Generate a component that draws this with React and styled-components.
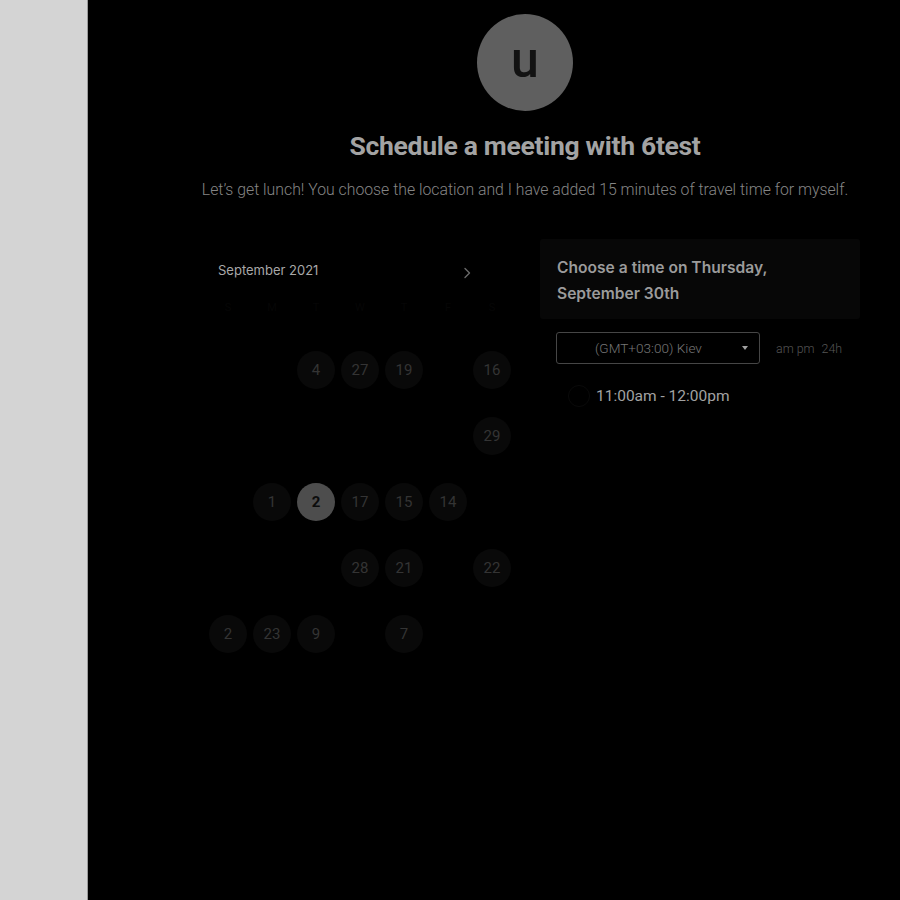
import React from 'react';
import styled, { createGlobalStyle } from 'styled-components';

const GlobalStyle = createGlobalStyle`
  html, body {
    margin: 0;
    padding: 0;
    background: #000;
  }
  body {
    font-family: Roboto, "Liberation Sans", sans-serif;
  }
  * {
    box-sizing: border-box;
  }
`;

const Page = styled.div`
  display: flex;
  width: 900px;
  height: 900px;
  overflow: hidden;
`;

const Sidebar = styled.aside`
  width: 88px;
  flex-shrink: 0;
  background: #d4d4d4;
  border-right: 1px solid #9a9a9a;
`;

const Main = styled.main`
  flex: 1;
  background: #000;
  padding: 14px 0 0 112px;
`;

const Content = styled.div`
  width: 650px;
`;

const Header = styled.header`
  display: flex;
  flex-direction: column;
  align-items: center;
`;

const Avatar = styled.div`
  width: 96px;
  height: 97px;
  border-radius: 50%;
  background: #5f5f5f;
  color: #121212;
  display: flex;
  align-items: center;
  justify-content: center;
  font-size: 50px;
  font-weight: 500;
  padding-bottom: 6px;
`;

const Title = styled.h1`
  margin: 20px 0 0;
  font-size: 26.5px;
  line-height: 30px;
  font-weight: 700;
  color: #a3a3a3;
  letter-spacing: -0.3px;
`;

const Description = styled.p`
  margin: 19px 0 0;
  font-size: 15.8px;
  line-height: 20px;
  font-weight: 300;
  color: #858585;
  white-space: nowrap;
`;

const Body = styled.div`
  display: flex;
  gap: 26px;
  margin-top: 39px;
  margin-right: -10px;
`;

const Calendar = styled.section`
  width: 314px;
  padding-left: 6px;
`;

const MonthBar = styled.div`
  height: 62px;
  display: flex;
  align-items: center;
  justify-content: space-between;
  padding: 0 40px 0 12px;
  font-family: Inter, "Open Sans", sans-serif;
  font-size: 13px;
  color: #a8a8a8;
`;

const Chevron = styled.svg`
  width: 14px;
  height: 14px;
  margin-top: 6px;
`;

const Weekdays = styled.div`
  display: grid;
  grid-template-columns: repeat(7, 44px);
  height: 36px;
  align-items: start;
  font-size: 11px;
  color: #060606;
  text-align: center;
`;

const Days = styled.div`
  display: grid;
  grid-template-columns: repeat(7, 44px);
  grid-auto-rows: 66px;
`;

const Cell = styled.div`
  display: flex;
  align-items: center;
  justify-content: center;
`;

const Day = styled.div`
  width: 38px;
  height: 38px;
  border-radius: 50%;
  display: flex;
  align-items: center;
  justify-content: center;
  font-size: 15px;
  background: ${p => (p.$selected ? '#4d4d4d' : '#090909')};
  color: ${p => (p.$selected ? '#0c0c0c' : '#343434')};
  font-weight: ${p => (p.$selected ? 700 : 400)};
`;

const Panel = styled.section`
  width: 320px;
`;

const PanelHead = styled.div`
  background: #070707;
  padding: 16px 16px 12px 17px;
  border-radius: 3px;
`;

const PanelTitle = styled.h2`
  margin: 0;
  font-family: Inter, "Noto Sans", sans-serif;
  font-size: 15.6px;
  line-height: 26px;
  font-weight: 600;
  color: #9b9b9b;
`;

const Controls = styled.div`
  display: flex;
  align-items: center;
  margin: 13px 0 0 16px;
`;

const Select = styled.div`
  position: relative;
  width: 204px;
  height: 32px;
  border: 1px solid #464646;
  border-radius: 3px;
  display: flex;
  align-items: center;
  padding-left: 38px;
  font-size: 13.6px;
  font-weight: 300;
  color: #767676;
`;

const Caret = styled.span`
  position: absolute;
  right: 11px;
  top: 13px;
  border-left: 3.5px solid transparent;
  border-right: 3.5px solid transparent;
  border-top: 4px solid #a0a0a0;
`;

const Formats = styled.div`
  display: flex;
  gap: 7px;
  margin-left: 16px;
  font-size: 12.4px;
  font-weight: 300;
  color: #555;
`;

const Slot = styled.div`
  display: flex;
  align-items: center;
  gap: 6px;
  margin: 21px 0 0 42px;
  font-size: 15.5px;
  font-weight: 400;
  color: #a2a2a2;
`;

const Radio = styled.span`
  width: 22px;
  height: 22px;
  border-radius: 50%;
  border: 1px solid #0a0a0a;
  margin-left: -14px;
`;

const WEEKDAYS = ['S', 'M', 'T', 'W', 'T', 'F', 'S'];

const DAYS = [
  null, null, 4, 27, 19, null, 16,
  null, null, null, null, null, null, 29,
  null, 1, 2, 17, 15, 14, null,
  null, null, null, 28, 21, null, 22,
  2, 23, 9, null, 7, null, null,
];

const SELECTED = 16;

const App = () => (
  <>
    <GlobalStyle />
    <Page>
      <Sidebar />
      <Main>
        <Content>
          <Header>
            <Avatar>u</Avatar>
            <Title>Schedule a meeting with 6test</Title>
            <Description>
              Let’s get lunch! You choose the location and I have added 15 minutes of travel time for myself.
            </Description>
          </Header>
          <Body>
            <Calendar>
              <MonthBar>
                <span>September 2021</span>
                <Chevron viewBox="0 0 14 14" fill="none" stroke="#6a6a6a" strokeWidth="1.4" strokeLinecap="round" strokeLinejoin="round">
                  <path d="M5 2.5 9.5 7 5 11.5" />
                </Chevron>
              </MonthBar>
              <Weekdays>
                {WEEKDAYS.map((d, i) => <span key={i}>{d}</span>)}
              </Weekdays>
              <Days>
                {DAYS.map((d, i) => (
                  <Cell key={i}>
                    {d !== null && <Day $selected={i === SELECTED}>{d}</Day>}
                  </Cell>
                ))}
              </Days>
            </Calendar>
            <Panel>
              <PanelHead>
                <PanelTitle>
                  Choose a time on Thursday,
                  <br />
                  September 30th
                </PanelTitle>
              </PanelHead>
              <Controls>
                <Select>
                  (GMT+03:00) Kiev
                  <Caret />
                </Select>
                <Formats>
                  <span>am pm</span>
                  <span>24h</span>
                </Formats>
              </Controls>
              <Slot>
                <Radio />
                11:00am - 12:00pm
              </Slot>
            </Panel>
          </Body>
        </Content>
      </Main>
    </Page>
  </>
);

export default App;
